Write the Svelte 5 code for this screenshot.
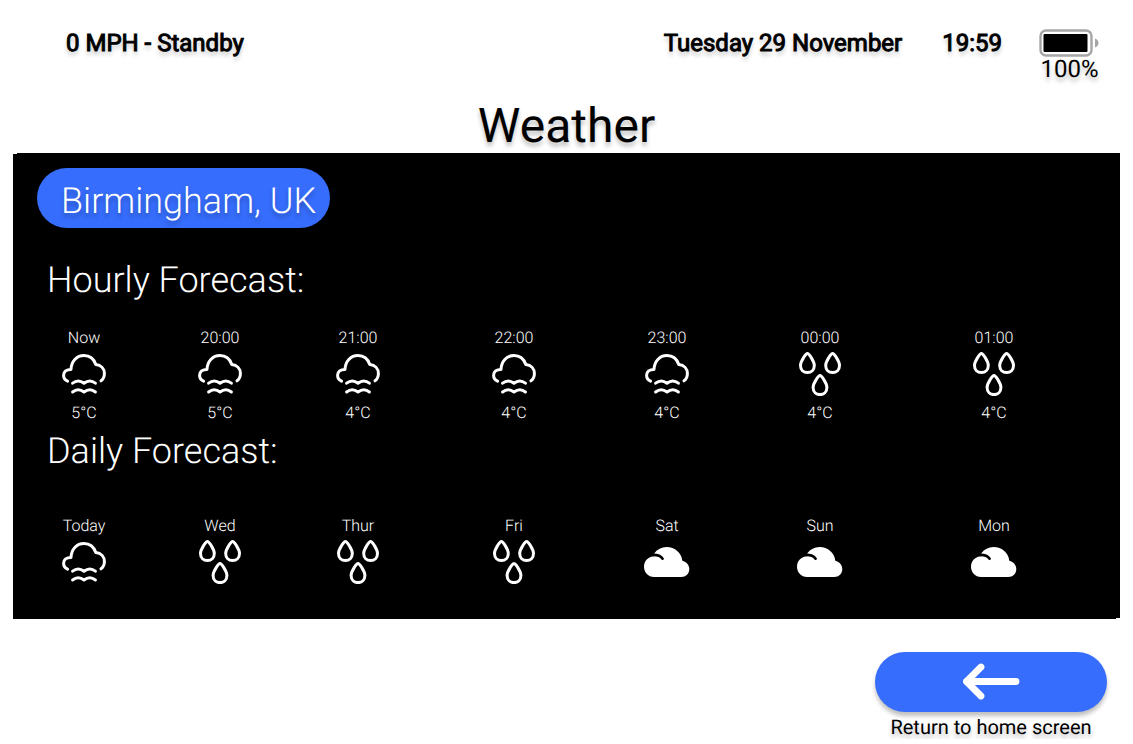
<script>
  const hourly = [
    { label: 'Now', icon: 'fog', temp: '5°C' },
    { label: '20:00', icon: 'fog', temp: '5°C' },
    { label: '21:00', icon: 'fog', temp: '4°C' },
    { label: '22:00', icon: 'fog', temp: '4°C' },
    { label: '23:00', icon: 'fog', temp: '4°C' },
    { label: '00:00', icon: 'rain', temp: '4°C' },
    { label: '01:00', icon: 'rain', temp: '4°C' }
  ];

  const daily = [
    { label: 'Today', icon: 'fog' },
    { label: 'Wed', icon: 'rain' },
    { label: 'Thur', icon: 'rain' },
    { label: 'Fri', icon: 'rain' },
    { label: 'Sat', icon: 'cloud' },
    { label: 'Sun', icon: 'cloud' },
    { label: 'Mon', icon: 'cloud' }
  ];

  const drops = [
    [8.4, 0],
    [33.6, 0],
    [21, 22]
  ];
</script>

{#snippet weatherIcon(kind)}
  <div class="icon">
    {#if kind === 'fog'}
      <svg width="44" height="41" viewBox="0 0 44 41" aria-hidden="true">
        <path d="M5.6 27.2C2.8 25.9 1.6 23.8 1.6 21.2C1.6 17.8 4.5 15.4 9 15.4C9.3 7.3 14.6 1.6 22 1.6C27.6 1.6 31.8 4.8 33.8 10.6C39.2 11.2 42.4 14.8 42.4 19.6C42.4 22.6 41.4 25.2 39 26.8" />
        <path d="M10.6 29.2C14 26.5 18.4 26.5 22 29.2C25.6 26.5 30 26.5 33.4 29.2" />
        <path d="M10.6 38C14 35.3 18.4 35.3 22 38C25.6 35.3 30 35.3 33.4 38" />
      </svg>
    {:else if kind === 'rain'}
      <svg width="42" height="44" viewBox="0 0 42 44" aria-hidden="true">
        {#each drops as [x, y]}
          <path transform="translate({x} {y})" d="M0 1.5C-1.4 1.5 -6.9 9 -6.9 13.6C-6.9 17.8 -3.9 20.6 0 20.6C3.9 20.6 6.9 17.8 6.9 13.6C6.9 9 1.4 1.5 0 1.5Z" />
        {/each}
      </svg>
    {:else}
      <svg width="46" height="30" viewBox="0 0 46 30" aria-hidden="true">
        <path class="solid" d="M10 30C4.4 30 0 25.6 0 19.8C0 14 4 9.6 10.3 9.3V6.2C13.4 2.3 17.5 0 22.5 0C31 0 37.6 5.8 38.3 13.7C42.5 14.8 45.3 18 45.3 22C45.3 26.8 41.8 30 37.3 30Z" />
        <path class="fold" d="M9 7.9C13.2 7.8 16.6 8.8 18.6 11.7" />
      </svg>
    {/if}
  </div>
{/snippet}

<div class="screen">
  <header>
    <span class="status">0 MPH - Standby</span>
    <span class="status date">Tuesday 29 November</span>
    <time class="status">19:59</time>
    <div class="battery">
      <svg width="61" height="28" viewBox="0 0 61 28" aria-hidden="true">
        <rect x="1.5" y="1.5" width="51" height="25" rx="5.5" fill="none" stroke="#a6a6a6" stroke-width="2.4" />
        <rect x="4.5" y="5" width="44" height="18" rx="1" fill="#000" />
        <path d="M56 9.5C58.2 10.3 59.5 12 59.5 14C59.5 16 58.2 17.7 56 18.5Z" fill="#a6a6a6" />
      </svg>
      <span>100%</span>
    </div>
  </header>

  <h1>Weather</h1>

  <main>
    <p class="place">Birmingham, UK</p>

    <section>
      <h2>Hourly Forecast:</h2>
      <ol class="hourly">
        {#each hourly as item}
          <li>
            <span>{item.label}</span>
            {@render weatherIcon(item.icon)}
            <span>{item.temp}</span>
          </li>
        {/each}
      </ol>
    </section>

    <section>
      <h2>Daily Forecast:</h2>
      <ol class="daily">
        {#each daily as item}
          <li>
            <span>{item.label}</span>
            {@render weatherIcon(item.icon)}
          </li>
        {/each}
      </ol>
    </section>
  </main>

  <footer>
    <button id="home" type="button">
      <svg width="58" height="38" viewBox="0 0 58 38" aria-hidden="true">
        <path d="M54 18.500H4.500M19 4L4.500 18.500L19 33" />
      </svg>
    </button>
    <label for="home">Return to home screen</label>
  </footer>
</div>

<style>
  :global(body) {
    margin: 0;
    background: #fff;
  }

  .screen {
    font-family: Roboto, sans-serif;
    text-rendering: geometricPrecision;
    color: #000;
    text-shadow: 0 4px 4px rgba(0, 0, 0, 0.25);
  }

  h1,
  h2,
  p,
  ol {
    margin: 0;
    padding: 0;
    font-weight: 400;
  }

  header {
    display: flex;
    align-items: flex-start;
    gap: 40px;
    padding: 29px 33px 0 66px;
  }

  .status {
    font-size: 24px;
    line-height: 28px;
    -webkit-text-stroke: 1px #000;
  }

  .date {
    margin-left: auto;
  }

  .battery {
    display: flex;
    flex-direction: column;
    align-items: center;
    margin-left: -3px;
    font-size: 24px;
    line-height: 24px;
  }

  .battery svg {
    display: block;
  }

  h1 {
    padding-top: 17px;
    font-size: 48px;
    line-height: 55px;
    text-align: center;
  }

  main {
    margin: 0 13px;
    padding: 15px 38px 31px 3px;
    background: #000;
    color: #fff;
    clip-path: polygon(
      4px 0, 100% 0, 100% calc(100% - 1px), calc(100% - 4px) calc(100% - 1px),
      calc(100% - 4px) 100%, 0 100%, 0 1px, 4px 1px
    );
  }

  .place {
    width: fit-content;
    margin-left: 21px;
    padding: 6px 14px 0 24px;
    border-radius: 30px;
    background: #366dfc;
    font-size: 36px;
    font-weight: 300;
    line-height: 54px;
  }

  h2 {
    padding-left: 31px;
    font-size: 36px;
    font-weight: 300;
    line-height: 42px;
  }

  section:first-of-type {
    padding-top: 31px;
  }

  section + section {
    padding-top: 7px;
  }

  ol {
    display: grid;
    grid-template-columns: 136fr 136fr 140fr 172fr 134fr 172fr 176fr;
    list-style: none;
    font-size: 16px;
    font-weight: 300;
    line-height: 20px;
  }

  .hourly {
    padding-top: 27px;
  }

  .hourly .icon {
    padding-bottom: 3px;
  }

  .daily {
    padding-top: 44px;
  }

  li {
    display: flex;
    flex-direction: column;
    align-items: center;
  }

  .icon {
    display: flex;
    align-items: center;
    height: 52px;
  }

  .icon svg {
    display: block;
    fill: none;
    stroke: #fff;
    stroke-width: 3;
    stroke-linecap: round;
    stroke-linejoin: round;
  }

  .icon .solid {
    fill: #fff;
    stroke: none;
  }

  .icon .fold {
    stroke: #000;
    stroke-width: 2.6;
  }

  footer {
    display: flex;
    flex-direction: column;
    align-items: center;
    width: fit-content;
    margin-left: auto;
    padding: 33px 26px 0 0;
  }

  button {
    display: grid;
    place-items: center;
    width: 232px;
    height: 60px;
    padding: 0;
    border: 0;
    border-radius: 30px;
    background: #366dfc;
    box-shadow: 0 4px 4px rgba(0, 0, 0, 0.25);
    cursor: pointer;
  }

  button path {
    fill: none;
    stroke: #fff;
    stroke-width: 6.8;
    stroke-linecap: round;
    stroke-linejoin: round;
  }

  label {
    padding-top: 3px;
    font-size: 20px;
    line-height: 24px;
  }
</style>
